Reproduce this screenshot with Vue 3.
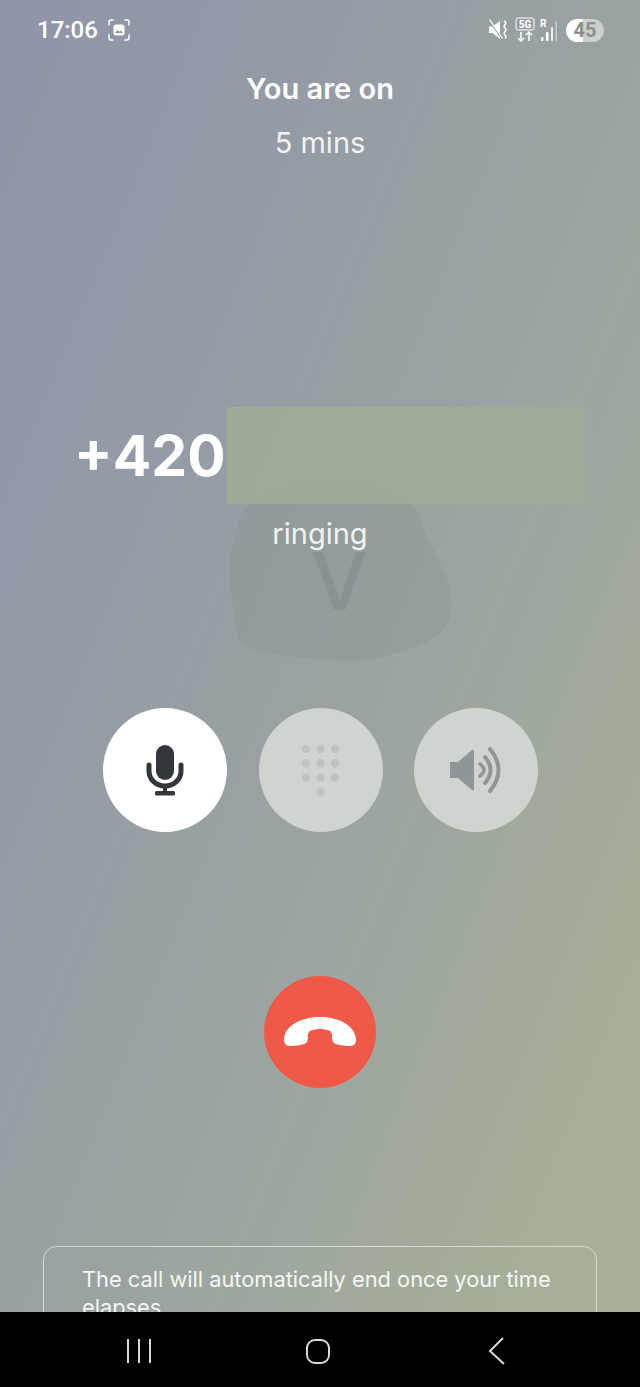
<template>
  <div class="phone">
    <div class="screen">
      <div class="status-bar">
        <div class="status-left">
          <span class="clock">17:06</span>
          <svg class="shot" width="22" height="22" viewBox="0 0 22 22" fill="none" stroke="#fff" stroke-width="1.5" stroke-linecap="round">
            <path d="M1 6V3a2 2 0 0 1 2-2h2M17 1h2a2 2 0 0 1 2 2v3M21 16v3a2 2 0 0 1-2 2h-2M5 21H3a2 2 0 0 1-2-2v-3" />
            <rect x="5.5" y="5.5" width="11" height="11" rx="2.5" fill="#fff" stroke="none" />
            <path d="M7 14l2.500-3 2 1.800 1.500-1.300 2 2.500z" fill="#8f94a4" stroke="none" />
          </svg>
        </div>
        <div class="status-right">
          <svg class="mute" width="20" height="22" viewBox="0 0 20 22" fill="#fff">
            <path d="M1 7.500h3.500L12 2v18l-7.500-6H1z" />
            <path d="M1 1l13 19" stroke="#959aa0" stroke-width="1.500" />
            <path d="M1.500 0.500l13 19" stroke="#fff" stroke-width="1.300" />
            <path d="M16 2q3 1.800 1 3.600t0 3.400q2 1.800 0 3.600t0 3.400q2 1.800 0 3.400" fill="none" stroke="#fff" stroke-width="1.500" />
          </svg>
          <svg class="net" width="21" height="26" viewBox="0 0 21 26" fill="none" stroke="#fff">
            <rect x="1" y="1" width="18" height="12" rx="2" stroke-width="1" />
            <text x="10" y="11" text-anchor="middle" class="net-text">5G</text>
            <path d="M6 15v9M3 21l3 3 3-3M14 24v-9M11 18l3-3 3 3" stroke-width="1.500" />
          </svg>
          <svg class="signal" width="18" height="24" viewBox="0 0 18 24" fill="#fff">
            <text x="0" y="9" class="roam">R</text>
            <rect x="1" y="19" width="2.500" height="4" rx="1" />
            <rect x="6" y="14" width="2.500" height="9" rx="1" />
            <rect x="11" y="9" width="2" height="14" rx="1" opacity="0.85" />
            <rect x="15.500" y="3" width="1.500" height="20" rx="0.700" opacity="0.45" />
          </svg>
          <div class="battery"><span>45</span></div>
        </div>
      </div>

      <div class="call-head">
        <div class="title">You are on</div>
        <div class="mins">5 mins</div>
      </div>

      <div class="middle">
        <svg class="blob" width="224" height="186" viewBox="0 0 224 186">
          <path d="M14 37C25 15 60 0 110 0c40 0 70 15 80 39 7 21 15 36 25 56 9 20 9 40 5 50-10 20-40 30-80 39-40 2-100-4-120-12-12-7-14-22-16-42C-1 100 0 60 14 37z" fill="#8b9594" opacity="0.42" />
        </svg>
        <div class="blob-letter">V</div>
        <div class="number-row">
          <span class="number">+420</span>
          <div class="hidden-digits"></div>
        </div>
        <div class="state">ringing</div>
      </div>

      <div class="controls">
        <button class="round on">
          <svg width="40" height="54" viewBox="0 -1 40 54">
            <rect x="11" y="1" width="18" height="35" rx="9" fill="#33363a" />
            <path d="M4 21v6a16 15 0 0 0 32 0v-6" fill="none" stroke="#33363a" stroke-width="5" stroke-linecap="round" />
            <path d="M20 42v7" stroke="#33363a" stroke-width="4" />
            <rect x="10" y="47" width="20" height="4.500" rx="1.500" fill="#33363a" />
          </svg>
        </button>
        <button class="round off">
          <svg width="46" height="60" viewBox="0 0 46 60" fill="#bfc3bf">
            <circle v-for="d in keypadDots" :key="d.x + '-' + d.y" :cx="d.x" :cy="d.y" r="4.200" />
          </svg>
        </button>
        <button class="round off">
          <svg width="54" height="46" viewBox="0 0 54 46">
            <path d="M1 15h8l14-12q2-1.500 2 1v38q0 2.500-2 1L9 31H1z" fill="#8f9697" />
            <path d="M31 17l3 3q2 3 0 6l-3 3" fill="none" stroke="#8f9697" stroke-width="3.500" stroke-linecap="round" />
            <path d="M36 10q11 13 0 26" fill="none" stroke="#8f9697" stroke-width="4" stroke-linecap="round" />
            <path d="M41 2q17 21 0 42" fill="none" stroke="#8f9697" stroke-width="4" stroke-linecap="round" />
          </svg>
        </button>
      </div>

      <div class="hangup-wrap">
        <button class="hangup">
          <svg width="72" height="30" viewBox="0 0 72 30">
            <path d="M0 22C1 8 18 0 36 0s35 8 36 22c0 5-2 7-6 7-6 0-13-1-16-3-3-2-1-8-3-11-1-2-7-3-11-3s-10 1-11 3c-2 3 0 9-3 11-3 2-10 3-16 3-4 0-6-2-6-7z" fill="#fff" />
          </svg>
        </button>
      </div>

      <div class="notice">The call will automatically end once your time elapses.</div>
    </div>

    <div class="nav-bar">
      <svg width="26" height="24" viewBox="0 0 26 24" stroke="#d8d8d8" stroke-width="2">
        <path d="M2 0v24M13 0v24M24 0v24" />
      </svg>
      <svg width="26" height="27" viewBox="0 0 26 27" fill="none" stroke="#d8d8d8" stroke-width="2">
        <rect x="2" y="2" width="22" height="23" rx="8" />
      </svg>
      <svg width="18" height="28" viewBox="0 0 18 28" fill="none" stroke="#d8d8d8" stroke-width="2">
        <path d="M15 1L2 14l14 13" />
      </svg>
    </div>
  </div>
</template>

<script setup>
// 3 x 3 grid plus the lone zero key
const keypadDots = []
for (let row = 0; row < 3; row++) {
  for (let col = 0; col < 3; col++) {
    keypadDots.push({ x: 8 + col * 14.5, y: 9 + row * 14.3 })
  }
}
keypadDots.push({ x: 22.5, y: 52 })
</script>

<style scoped>
.phone {
  width: 640px;
  height: 1387px;
  display: flex;
  flex-direction: column;
  font-family: Inter, "Liberation Sans", sans-serif;
  color: #fff;
  overflow: hidden;
}
.screen {
  height: 1312px;
  position: relative;
  overflow: hidden;
  display: flex;
  flex-direction: column;
  background: linear-gradient(112deg, #8f94a9 0%, #959ca5 32%, #9ca5a0 60%, #a7b098 92%, #a7b098 100%);
}
.status-bar {
  height: 60px;
  padding: 0 36px 0 37px;
  display: flex;
  justify-content: space-between;
  align-items: center;
  box-sizing: border-box;
  flex-shrink: 0;
}
.status-left {
  display: flex;
  align-items: center;
  gap: 10px;
}
.clock {
  font-family: Roboto, sans-serif;
  font-weight: 500;
  font-size: 24px;
}
.status-right {
  display: flex;
  align-items: center;
  gap: 4px;
}
.net {
  margin-left: 3px;
}
.net-text {
  font-family: Roboto, sans-serif;
  font-size: 10px;
  font-weight: 700;
  fill: #fff;
  stroke: none;
}
.roam {
  font-family: Roboto, sans-serif;
  font-size: 10px;
  font-weight: 700;
}
.battery {
  width: 38px;
  height: 23px;
  margin-left: 4px;
  border-radius: 12px;
  display: flex;
  align-items: center;
  justify-content: center;
  background: linear-gradient(90deg, #fff 0 45%, #ccd0cc 45% 100%);
  color: #8a908e;
  font-family: Roboto, sans-serif;
  font-weight: 700;
  font-size: 20px;
}
.call-head {
  display: flex;
  flex-direction: column;
  align-items: center;
  margin-top: 12px;
}
.title {
  font-size: 29px;
  font-weight: 600;
  line-height: 34px;
}
.mins {
  font-size: 29px;
  line-height: 34px;
  margin-top: 20px;
  color: #f1f3f3;
}
.middle {
  position: relative;
  margin-top: 247px;
  height: 254px;
  flex-shrink: 0;
}
.blob {
  position: absolute;
  left: 229px;
  top: 69px;
}
.blob-letter {
  position: absolute;
  left: 311px;
  top: 129px;
  font-size: 80px;
  line-height: 90px;
  font-weight: 500;
  color: #899292;
}
.number-row {
  position: relative;
  display: flex;
  align-items: center;
  height: 97px;
  padding-left: 74px;
}
.number {
  font-size: 57px;
  font-weight: 700;
  width: 153px;
  white-space: nowrap;
}
.hidden-digits {
  width: 358px;
  height: 97px;
  border-radius: 2px;
  background: rgba(161, 171, 153, 0.92);
}
.state {
  position: relative;
  text-align: center;
  font-size: 29px;
  line-height: 34px;
  margin-top: 13px;
  color: #f1f3f3;
}
.controls {
  display: flex;
  justify-content: center;
  gap: 31.500px;
  margin-left: 1px;
  margin-top: 47px;
}
.round {
  width: 124px;
  height: 124px;
  border: none;
  border-radius: 50%;
  padding: 0;
  display: flex;
  align-items: center;
  justify-content: center;
}
.round.on {
  background: #fff;
}
.round.off {
  background: #d0d4d0;
}
.hangup-wrap {
  display: flex;
  justify-content: center;
  margin-top: 144px;
}
.hangup {
  width: 112px;
  height: 112px;
  border: none;
  border-radius: 50%;
  padding: 0;
  background: #ee5a47;
  display: flex;
  align-items: center;
  justify-content: center;
}
.notice {
  margin: 158px 43px 0;
  width: 554px;
  box-sizing: border-box;
  border: 1.500px solid #d3d8d2;
  border-radius: 14px;
  padding: 18px 38px;
  font-size: 21.800px;
  line-height: 28px;
  flex-shrink: 0;
  color: #f5f6f4;
}
.nav-bar {
  height: 75px;
  background: #000;
  display: flex;
  align-items: center;
  justify-content: center;
  padding: 3px 8px 0 0;
  box-sizing: border-box;
}
.nav-bar svg:nth-child(1) {
  margin-right: 153px;
}
.nav-bar svg:nth-child(3) {
  margin-left: 157px;
}
</style>
